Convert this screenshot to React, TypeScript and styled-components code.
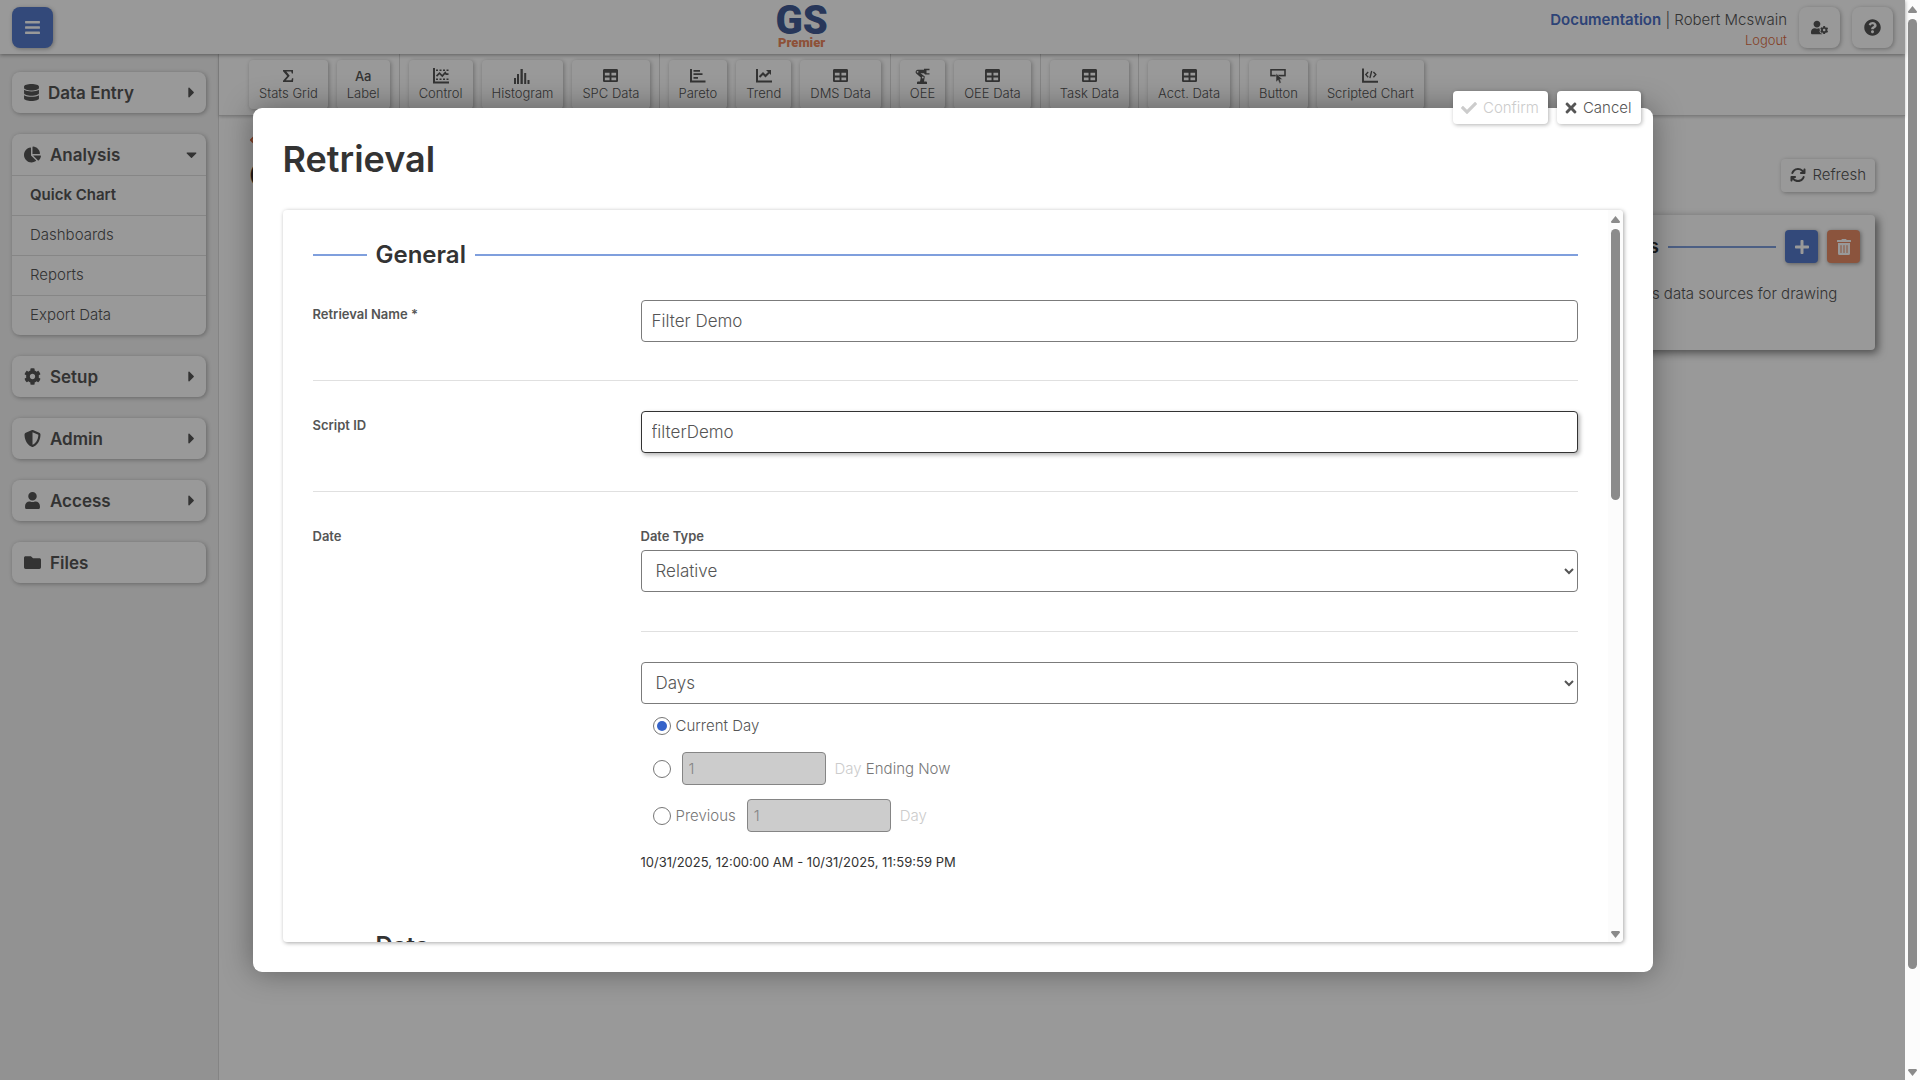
import React, { ReactNode } from "react";
import styled, { createGlobalStyle, css } from "styled-components";
import {
  FaBars,
  FaCaretDown,
  FaCaretRight,
  FaChartPie,
  FaCheck,
  FaChevronLeft,
  FaCog,
  FaDatabase,
  FaFolder,
  FaPlus,
  FaQuestionCircle,
  FaTable,
  FaTimes,
  FaTrashAlt,
  FaUser,
  FaUserCog,
} from "react-icons/fa";
import { FaArrowsRotate, FaShieldHalved } from "react-icons/fa6";

const color = {
  text: "#555",
  strong: "#333",
  border: "#e0e0e0",
  blue: "#557acb",
  link: "#4c70c6",
  rule: "#7f9fdd",
  orange: "#e88d67",
  logout: "#dc6c42",
};

const raised = css`
  background: #fff;
  box-shadow: 1px 1px 4px rgba(0, 0, 0, 0.3);
`;

const GlobalStyle = createGlobalStyle`
  *, *::before, *::after { box-sizing: border-box; }
  body {
    margin: 0;
    color: ${color.text};
    font-family: Inter, "Liberation Sans", sans-serif;
    font-size: 15px;
    font-weight: 300;
    line-height: 20px;
  }
  button, input, select { font: inherit; color: inherit; margin: 0; }
  button { border: 0; cursor: pointer; }
  a { text-decoration: none; }
  h1, h2, p { margin: 0; }
`;

/* Narrow glyphs sit centred in a slot as wide as their own strokes. */
const IconSlot = styled.span<{ $width: number }>`
  display: flex;
  justify-content: center;
  width: ${(p) => p.$width}px;
  svg {
    flex: none;
  }
`;

/* ---------- frame ---------- */

const Frame = styled.div`
  display: flex;
  height: 100vh;
  overflow: hidden;
`;

const Page = styled.div`
  position: relative;
  flex: 1;
  min-width: 0;
  display: flex;
  flex-direction: column;
  background: #fff;
`;

const Track = styled.div`
  flex: none;
  display: flex;
  flex-direction: column;
  align-items: center;
  width: 15px;
  padding: 6px 0 4px;
  background: #fcfcfc;
`;

const Arrow = styled.svg`
  flex: none;
  width: 9px;
  height: 7px;
  fill: #8b8b8b;
`;

const Rail = styled.div`
  flex: 1;
  width: 9px;
  margin: 6px 0;
`;

const Thumb = styled.div<{ $share: number }>`
  height: ${(p) => p.$share}%;
  border-radius: 5px;
  background: #8b8b8b;
`;

function Scrollbar({ share }: { share: number }) {
  return (
    <Track aria-hidden="true">
      <Arrow viewBox="0 0 9 7">
        <path d="M4.5 0 L9 5.5 Q9 7 8 7 H1 Q0 7 0 5.5 Z" />
      </Arrow>
      <Rail>
        <Thumb $share={share} />
      </Rail>
      <Arrow viewBox="0 0 9 7">
        <path d="M4.5 7 L9 1.5 Q9 0 8 0 H1 Q0 0 0 1.5 Z" />
      </Arrow>
    </Track>
  );
}

/* ---------- header ---------- */

const Header = styled.header`
  z-index: 1;
  flex: none;
  display: flex;
  align-items: center;
  justify-content: space-between;
  height: 54px;
  padding: 0 12px;
  background: #fff;
  box-shadow: 0 1px 4px rgba(0, 0, 0, 0.4);
`;

const SquareButton = styled.button<{ $primary?: boolean }>`
  ${raised}
  display: grid;
  place-items: center;
  width: 41px;
  height: 41px;
  padding: 0;
  border-radius: 8px;
  font-size: 17px;
  ${(p) => p.$primary && css`background: ${color.blue}; color: #fff;`}
`;

const Logo = styled.div`
  display: flex;
  flex-direction: column;
  align-items: center;
  font-family: Roboto, "Liberation Sans", sans-serif;
  font-weight: 900;
`;

const LogoMark = styled.span`
  color: #435c96;
  font-size: 40px;
  line-height: 32px;
`;

const LogoName = styled.span`
  color: #ec875e;
  font-size: 13px;
  line-height: 12px;
`;

const Account = styled.div`
  display: flex;
  align-items: center;
  gap: 12px;
`;

const AccountText = styled.div`
  padding-top: 6px;
  text-align: right;
`;

const DocLink = styled.a`
  color: ${color.link};
  font-weight: 600;
`;

const LogoutLink = styled.a`
  color: ${color.logout};
  font-size: 13px;
`;

/* ---------- sidebar ---------- */

const Body = styled.div`
  flex: 1;
  min-height: 0;
  display: flex;
`;

const Sidebar = styled.nav`
  flex: none;
  display: flex;
  flex-direction: column;
  gap: 21px;
  width: 219px;
  padding: 18px 12px;
  border-right: 1px solid #dcdcdc;
  background: #f3f3f3;
`;

const Group = styled.section`
  ${raised}
  border-radius: 8px;
`;

const GroupButton = styled.button`
  display: flex;
  align-items: center;
  gap: 9px;
  width: 100%;
  height: 41px;
  padding: 0 12px;
  background: none;
  font-size: 17px;
  font-weight: 600;
  text-align: left;
`;

const GroupLabel = styled.span`
  flex: 1;
`;

const Entry = styled.a<{ $active?: boolean }>`
  display: block;
  height: 40px;
  padding-left: 18px;
  border-top: 1px solid ${color.border};
  color: ${color.text};
  font-weight: ${(p) => (p.$active ? 600 : 300)};
  line-height: 38px;
`;

/* ---------- toolbar ---------- */

const Workspace = styled.main`
  flex: 1;
  min-width: 0;
`;

const Toolbar = styled.div`
  display: flex;
  height: 62px;
  padding-left: 30px;
  border-bottom: 1px solid #d0d0d0;
  box-shadow: 0 1px 3px rgba(0, 0, 0, 0.2);
`;

const ToolGroup = styled.div`
  display: flex;
  gap: 9px;
  padding: 6px 9px;
  border-left: 1px solid #dcdcdc;
  &:first-child {
    padding-left: 0;
    border-left: 0;
  }
`;

const Tool = styled.button`
  ${raised}
  display: flex;
  flex-direction: column;
  align-items: center;
  justify-content: center;
  padding: 0 10px;
  border-radius: 4px;
  font-size: 13px;
  line-height: 18px;
  white-space: nowrap;
`;

const ToolIcon = styled.span`
  display: grid;
  place-items: center;
  height: 16px;
  font-size: 15px;
  line-height: 16px;
`;

const Glyph = styled.span`
  font-size: 13px;
  font-weight: 500;
`;

/* ---------- workspace content ---------- */

const Content = styled.div`
  padding: 15px 30px;
`;

const BackLink = styled.a`
  display: flex;
  align-items: center;
  height: 18px;
  color: ${color.logout};
  font-size: 12px;
`;

const TitleRow = styled.div`
  display: flex;
  align-items: center;
  justify-content: space-between;
  height: 52px;
  margin-bottom: 14px;
`;

const Title = styled.h1`
  color: ${color.strong};
  font-size: 36px;
  font-weight: 600;
  line-height: 42px;
`;

const ActionButton = styled.button`
  ${raised}
  display: inline-flex;
  align-items: center;
  gap: 6px;
  height: 33px;
  padding: 0 9px;
  border-radius: 4px;
  svg {
    width: 16px;
    height: 16px;
  }
  &:disabled {
    color: #ccc;
    cursor: default;
  }
`;

const Card = styled.section`
  width: 383px;
  min-height: 135px;
  margin-left: auto;
  padding: 15px;
  border-radius: 4px;
  background: #fff;
  box-shadow: 3px 3px 8px rgba(0, 0, 0, 0.5);
`;

const CardHead = styled.div`
  display: flex;
  align-items: center;
  gap: 9px;
  margin-bottom: 19px;
`;

const CardTitle = styled.h2`
  color: ${color.strong};
  font-size: 19px;
  font-weight: 600;
  line-height: 24px;
`;

const Rule = styled.span<{ $width?: number }>`
  flex: ${(p) => (p.$width ? `0 0 ${p.$width}px` : "1")};
  height: 2px;
  background: ${color.rule};
`;

const ToneButton = styled.button<{ $tone: string }>`
  display: grid;
  place-items: center;
  width: 33px;
  height: 33px;
  padding: 0;
  border-radius: 4px;
  background: ${(p) => p.$tone};
  box-shadow: 1px 1px 4px rgba(0, 0, 0, 0.4);
  color: #fff;
  font-size: 16px;
`;

const CardText = styled.p`
  line-height: 24px;
`;

/* ---------- dialog ---------- */

const Overlay = styled.div`
  position: absolute;
  inset: 0;
  z-index: 2;
  display: grid;
  place-items: center;
  background: rgba(0, 0, 0, 0.4);
`;

const Dialog = styled.div`
  position: relative;
  display: flex;
  flex-direction: column;
  width: min(1400px, 92%);
  height: 80vh;
  padding: 30px;
  border-radius: 9px;
  background: #fff;
  box-shadow: 0 0 30px rgba(0, 0, 0, 0.38);
`;

const DialogActions = styled.div`
  position: absolute;
  top: -17px;
  right: 12px;
  display: flex;
  gap: 9px;
`;

const Panel = styled.div`
  flex: 1;
  min-height: 0;
  display: flex;
  margin-top: 30px;
  border-radius: 4px;
  overflow: hidden;
  box-shadow: 1px 1px 4px rgba(0, 0, 0, 0.35);
`;

const Form = styled.form`
  flex: 1;
  min-width: 0;
  padding: 30px;
  overflow: hidden;
`;

const SectionHead = styled.div`
  display: flex;
  align-items: center;
  gap: 9px;
  height: 30px;
  margin-bottom: 30px;
`;

const SectionTitle = styled.h2`
  color: ${color.strong};
  font-size: 24px;
  font-weight: 600;
  line-height: 30px;
`;

const Row = styled.div`
  display: grid;
  grid-template-columns: 328px 1fr;
  padding-bottom: 38px;
  & + & {
    padding-top: 30px;
    border-top: 1px solid ${color.border};
  }
`;

const label = css`
  display: block;
  font-size: 13px;
  font-weight: 600;
  line-height: 28px;
`;

const Label = styled.label`
  ${label}
`;

const LabelText = styled.span`
  ${label}
`;

const control = css`
  display: block;
  width: 100%;
  height: 42px;
  border: 1px solid #7b7b7b;
  border-radius: 4px;
  background: #fff;
  font-size: 17px;
  outline: 0;
`;

const TextInput = styled.input<{ $focused?: boolean }>`
  ${control}
  padding: 0 10px;
  ${(p) =>
    p.$focused &&
    css`
      border-color: #333;
      box-shadow: 2px 2px 4px rgba(0, 0, 0, 0.3);
    `}
`;

const Select = styled.select`
  ${control}
  padding: 0 4px 0 10px;
`;

const SubBlock = styled.div`
  margin-top: 39px;
  padding-top: 30px;
  border-top: 1px solid ${color.border};
`;

const Choices = styled.div`
  display: flex;
  flex-direction: column;
  gap: 14px;
  padding: 10px 0 20px 12px;
`;

const Choice = styled.div<{ $muted?: boolean }>`
  display: flex;
  align-items: center;
  min-height: 24px;
  color: ${(p) => (p.$muted ? "#777" : color.text)};
`;

const Radio = styled.input`
  appearance: none;
  display: grid;
  place-items: center;
  width: 18px;
  height: 18px;
  border: 1px solid #767676;
  border-radius: 50%;
  &:checked::before {
    content: "";
    width: 10px;
    height: 10px;
    border-radius: 50%;
    background: #3563c9;
  }
`;

const ChoiceLabel = styled.label`
  padding-left: 5px;
`;

const CountInput = styled.input`
  width: 144px;
  height: 33px;
  margin: 0 9px 0 11px;
  padding: 0 6px;
  border: 1px solid #858585;
  border-radius: 4px;
  background: #ccc;
  &:disabled {
    color: #858585;
  }
`;

const Faint = styled.span`
  color: #ccc;
`;

const DateRange = styled.p`
  height: 41px;
  color: ${color.strong};
  font-size: 13px;
  font-weight: 400;
`;

/* ---------- drawn icons ---------- */

const SigmaIcon = () => (
  <svg width="12" height="12" viewBox="0 0 12 12" fill="currentColor">
    <path d="M1 0H11V3.4H9.8L9.2 1.6H4.3L7.7 5.8L3.8 10.2H9.4L10 8.2H11.3L11 12H1V10.8L5.2 6L1 1.2Z" />
  </svg>
);

const ControlIcon = () => (
  <svg width="16" height="16" viewBox="0 0 16 16" fill="none" stroke="currentColor">
    <path d="M1 0V14.5H16" strokeWidth="2" />
    <path d="M3 2.2H5M6.5 2.2H8.5M10 2.2H12M13.5 2.2H15.5M3 11.2H5M6.5 11.2H8.5M10 11.2H12M13.5 11.2H15.5" strokeWidth="1.6" />
    <path d="M3.5 8.2L6.5 5.2L9.3 8L12.2 4.6L13.2 6.2H15.5" strokeWidth="1.7" />
  </svg>
);

const HistogramIcon = () => (
  <svg width="16" height="16" viewBox="0 0 16 16" fill="currentColor">
    <path d="M0 10h2v6h-2zM3 6h2v10h-2zM6.500 1h2.300v15h-2.300zM10.200 5h2v11h-2zM13.500 12h2v4h-2z" />
  </svg>
);

const ParetoIcon = () => (
  <svg width="16" height="15" viewBox="0 0 16 15" fill="none" stroke="currentColor">
    <path d="M1 1V13.600H15.500" strokeWidth="2" />
    <path d="M3.500 2.800H10M3.500 6.200H12.500M3.500 9.800H8" strokeWidth="1.800" />
  </svg>
);

const TrendIcon = () => (
  <svg width="16" height="15" viewBox="0 0 16 15" fill="none" stroke="currentColor">
    <path d="M1 1V13.600H16" strokeWidth="2" />
    <path d="M3.500 9L7 5.500L9.500 8L13 4.500" strokeWidth="2" />
    <path d="M10 2H15V7Z" fill="currentColor" stroke="none" />
  </svg>
);

const RobotIcon = () => (
  <svg width="16" height="16" viewBox="0 0 16 16">
    <path
      fill="currentColor"
      d="M3 16v-1.500q0-1 1-1h2L6.800 9.500L2.200 5.500A2.200 2.200 0 0 1 3.600 1.800H10V0.800H15.500V2.200H12.500V5.200H15.500V6.600H11L10 5.200H6.500L10.800 8.500L10 13.500H12q1 0 1 1V16Z"
    />
    <circle cx="3.600" cy="3.800" r="0.900" fill="#fff" />
    <circle cx="8.800" cy="9.500" r="0.900" fill="#fff" />
  </svg>
);

const ButtonIcon = () => (
  <svg width="16" height="16" viewBox="0 0 16 16">
    <rect x="1" y="1.800" width="14" height="5.800" fill="none" stroke="currentColor" strokeWidth="1.600" />
    <path d="M6 5.500L12.500 11.200L9.900 11.400L11.200 14.600L9.600 15.400L8.200 12.200L6 14Z" fill="currentColor" stroke="#fff" strokeWidth="0.500" />
  </svg>
);

const ScriptIcon = () => (
  <svg width="16" height="15" viewBox="0 0 16 15" fill="none" stroke="currentColor">
    <path d="M1 0.500V13.800H16" strokeWidth="1.900" />
    <path d="M6.200 4L3.800 6.600L6.200 9.200M11.400 4L13.800 6.600L11.400 9.200M9.700 3L7.900 10.200" strokeWidth="1.400" />
  </svg>
);

/* ---------- data ---------- */

const tools: [string, ReactNode][][] = [
  [
    ["Stats Grid", <SigmaIcon />],
    ["Label", <Glyph>Aa</Glyph>],
  ],
  [
    ["Control", <ControlIcon />],
    ["Histogram", <HistogramIcon />],
    ["SPC Data", <FaTable />],
  ],
  [
    ["Pareto", <ParetoIcon />],
    ["Trend", <TrendIcon />],
    ["DMS Data", <FaTable />],
  ],
  [
    ["OEE", <RobotIcon />],
    ["OEE Data", <FaTable />],
  ],
  [["Task Data", <FaTable />]],
  [["Acct. Data", <FaTable />]],
  [
    ["Button", <ButtonIcon />],
    ["Scripted Chart", <ScriptIcon />],
  ],
];

const groups: { name: string; icon: ReactNode; entries?: string[]; leaf?: boolean }[] = [
  { name: "Data Entry", icon: <IconSlot $width={15}><FaDatabase /></IconSlot> },
  { name: "Analysis", icon: <FaChartPie />, entries: ["Quick Chart", "Dashboards", "Reports", "Export Data"] },
  { name: "Setup", icon: <FaCog /> },
  { name: "Admin", icon: <FaShieldHalved /> },
  { name: "Access", icon: <FaUser /> },
  { name: "Files", icon: <FaFolder />, leaf: true },
];

export default function App() {
  return (
    <Frame>
      <GlobalStyle />
      <Page>
        <Header>
          <SquareButton $primary aria-label="Menu">
            <FaBars />
          </SquareButton>
          <Logo>
            <LogoMark>GS</LogoMark>
            <LogoName>Premier</LogoName>
          </Logo>
          <Account>
            <AccountText>
              <div>
                <DocLink href="#docs">Documentation</DocLink> | Robert Mcswain
              </div>
              <LogoutLink href="#logout">Logout</LogoutLink>
            </AccountText>
            <SquareButton aria-label="User settings">
              <FaUserCog />
            </SquareButton>
            <SquareButton aria-label="Help">
              <FaQuestionCircle />
            </SquareButton>
          </Account>
        </Header>

        <Body>
          <Sidebar>
            {groups.map((g) => (
              <Group key={g.name}>
                <GroupButton>
                  {g.icon}
                  <GroupLabel>{g.name}</GroupLabel>
                  {!g.leaf && (
                    <IconSlot $width={6}>{g.entries ? <FaCaretDown /> : <FaCaretRight />}</IconSlot>
                  )}
                </GroupButton>
                {g.entries?.map((e, i) => (
                  <Entry key={e} href={`#${e}`} $active={i === 0}>
                    {e}
                  </Entry>
                ))}
              </Group>
            ))}
          </Sidebar>

          <Workspace>
            <Toolbar>
              {tools.map((group, i) => (
                <ToolGroup key={i}>
                  {group.map(([name, icon]) => (
                    <Tool key={name}>
                      <ToolIcon>{icon}</ToolIcon>
                      {name}
                    </Tool>
                  ))}
                </ToolGroup>
              ))}
            </Toolbar>
            <Content>
              <BackLink href="#back" aria-label="Back">
                <IconSlot $width={8}>
                  <FaChevronLeft />
                </IconSlot>
              </BackLink>
              <TitleRow>
                <Title>Quick Chart</Title>
                <ActionButton>
                  <FaArrowsRotate />
                  Refresh
                </ActionButton>
              </TitleRow>
              <Card>
                <CardHead>
                  <Rule $width={52} />
                  <CardTitle>Retrievals</CardTitle>
                  <Rule />
                  <ToneButton $tone={color.blue} aria-label="Add retrieval">
                    <FaPlus />
                  </ToneButton>
                  <ToneButton $tone={color.orange} aria-label="Delete retrieval">
                    <FaTrashAlt />
                  </ToneButton>
                </CardHead>
                <CardText>Retrievals are used as data sources for drawing charts.</CardText>
              </Card>
            </Content>
          </Workspace>
        </Body>

        <Overlay>
          <Dialog role="dialog" aria-labelledby="dialog-title">
            <DialogActions>
              <ActionButton disabled>
                <IconSlot $width={15}>
                  <FaCheck />
                </IconSlot>
                Confirm
              </ActionButton>
              <ActionButton>
                <IconSlot $width={11}>
                  <FaTimes />
                </IconSlot>
                Cancel
              </ActionButton>
            </DialogActions>
            <Title id="dialog-title">Retrieval</Title>
            <Panel>
              <Form>
                <SectionHead>
                  <Rule $width={54} />
                  <SectionTitle>General</SectionTitle>
                  <Rule />
                </SectionHead>
                <Row>
                  <Label htmlFor="name">Retrieval Name *</Label>
                  <TextInput id="name" defaultValue="Filter Demo" />
                </Row>
                <Row>
                  <Label htmlFor="script">Script ID</Label>
                  <TextInput id="script" defaultValue="filterDemo" $focused />
                </Row>
                <Row>
                  <LabelText>Date</LabelText>
                  <div>
                    <Label htmlFor="date-type">Date Type</Label>
                    <Select id="date-type">
                      <option>Relative</option>
                    </Select>
                    <SubBlock>
                      <Select aria-label="Unit">
                        <option>Days</option>
                      </Select>
                      <Choices>
                        <Choice>
                          <Radio type="radio" name="range" id="current" defaultChecked />
                          <ChoiceLabel htmlFor="current">Current Day</ChoiceLabel>
                        </Choice>
                        <Choice $muted>
                          <Radio type="radio" name="range" id="ending" />
                          <CountInput defaultValue="1" disabled aria-label="Days ending now" />
                          <label htmlFor="ending">
                            <Faint>Day</Faint> Ending Now
                          </label>
                        </Choice>
                        <Choice $muted>
                          <Radio type="radio" name="range" id="previous" />
                          <ChoiceLabel htmlFor="previous">Previous</ChoiceLabel>
                          <CountInput defaultValue="1" disabled aria-label="Previous days" />
                          <Faint>Day</Faint>
                        </Choice>
                      </Choices>
                      <DateRange>10/31/2025, 12:00:00 AM - 10/31/2025, 11:59:59 PM</DateRange>
                    </SubBlock>
                  </div>
                </Row>
                <SectionHead>
                  <Rule $width={54} />
                  <SectionTitle>Data</SectionTitle>
                  <Rule />
                </SectionHead>
              </Form>
              <Scrollbar share={39} />
            </Panel>
          </Dialog>
        </Overlay>
      </Page>
      <Scrollbar share={91} />
    </Frame>
  );
}
